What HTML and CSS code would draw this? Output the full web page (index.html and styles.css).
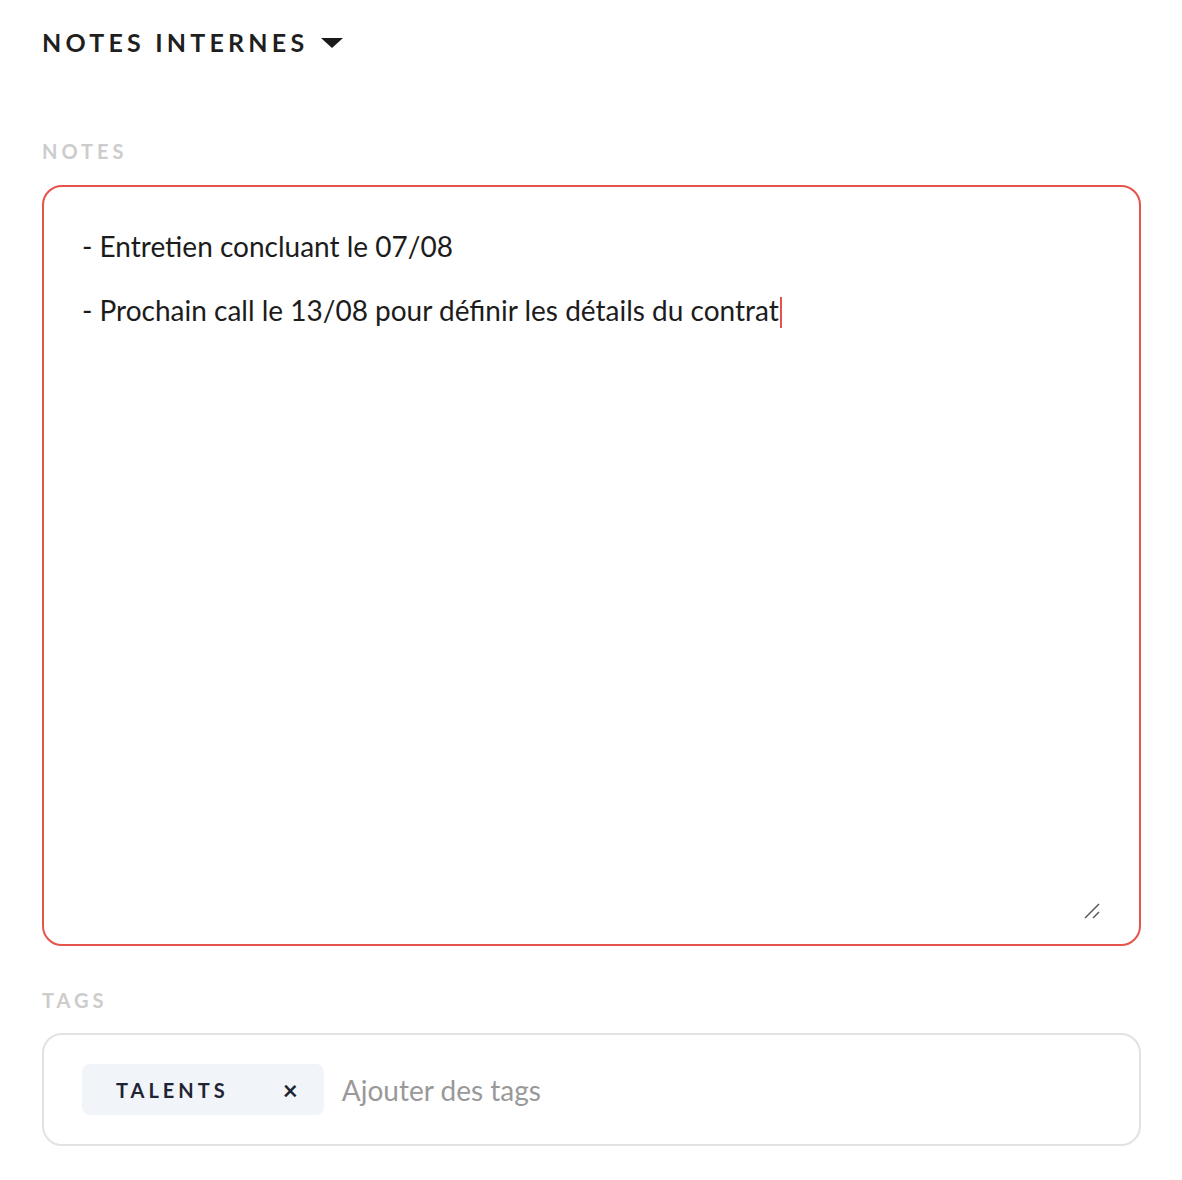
FILE: index.html
```html
<!DOCTYPE html>
<html lang="fr">
<head>
    <meta charset="UTF-8">
    <meta name="viewport" content="width=device-width, initial-scale=1.0">
    <title>Notes internes</title>
    <link rel="stylesheet" href="styles.css">
</head>
<body>
    <div class="container">
        <h2 class="section-title">
            Notes internes
            <svg class="caret-down" width="22" height="10" viewBox="0 0 22 10">
                <path d="M0 0 L22 0 L11 10 Z" fill="#1a1a1a"/>
            </svg>
        </h2>

        <label class="field-label">Notes</label>
        <div class="notes-box">
            <p>- Entretien concluant le 07/08</p>
            <p>- Prochain call le 13/08 pour définir les détails du contrat<span class="cursor"></span></p>
            <svg class="resize-handle" width="16" height="16" viewBox="0 0 16 16">
                <line x1="1" y1="15" x2="15" y2="1" stroke="#555" stroke-width="1.5"/>
                <line x1="9" y1="15" x2="15" y2="9" stroke="#555" stroke-width="1.5"/>
            </svg>
        </div>

        <label class="field-label">Tags</label>
        <div class="tags-box">
            <span class="tag">Talents <span class="tag-remove">&times;</span></span>
            <span class="tags-placeholder">Ajouter des tags</span>
        </div>
    </div>
</body>
</html>
```

FILE: styles.css
```css
body {
    margin: 0;
    font-family: Lato, "Open Sans", sans-serif;
    color: #1f1f1f;
    background: #fff;
}
.container {
    padding: 24px 41px 0 42px;
}
.section-title {
    margin: 0;
    font-size: 25px;
    font-weight: 700;
    text-transform: uppercase;
    letter-spacing: 4.2px;
    line-height: 36px;
    display: flex;
    align-items: center;
    gap: 12px;
}
.caret-down {
    margin-top: 2px;
    margin-left: 1px;
}
.field-label {
    display: block;
    margin-top: 79px;
    font-size: 20px;
    font-weight: 700;
    text-transform: uppercase;
    letter-spacing: 4px;
    color: #cccccc;
    line-height: 24px;
}
.notes-box {
    position: relative;
    margin-top: 22px;
    height: 714px;
    border: 2px solid #e5534b;
    border-radius: 20px;
    padding: 43px 38px 0 38px;
    font-size: 28px;
    color: #1c1c1c;
}
.notes-box p {
    margin: 0 0 32px;
    line-height: 32px;
}
.cursor {
    display: inline-block;
    width: 2px;
    height: 31px;
    background: #e5534b;
    vertical-align: -7px;
    margin-left: 1px;
}
.resize-handle {
    position: absolute;
    right: 39px;
    bottom: 25px;
}
.notes-box + .field-label {
    margin-top: 42px;
}
.tags-box {
    margin-top: 21px;
    border: 2px solid #e2e2e2;
    border-radius: 20px;
    padding: 29px 38px;
    display: flex;
    align-items: center;
    gap: 18px;
}
.tag {
    display: inline-flex;
    align-items: center;
    background: #f1f4f8;
    border-radius: 8px;
    height: 51px;
    padding: 0 26px 0 34px;
    font-size: 20px;
    font-weight: 700;
    letter-spacing: 4px;
    text-transform: uppercase;
    color: #1e2433;
}
.tag-remove {
    margin-left: 54px;
    font-size: 26px;
    letter-spacing: 0;
}
.tags-placeholder {
    font-size: 28px;
    color: #999;
}
```
